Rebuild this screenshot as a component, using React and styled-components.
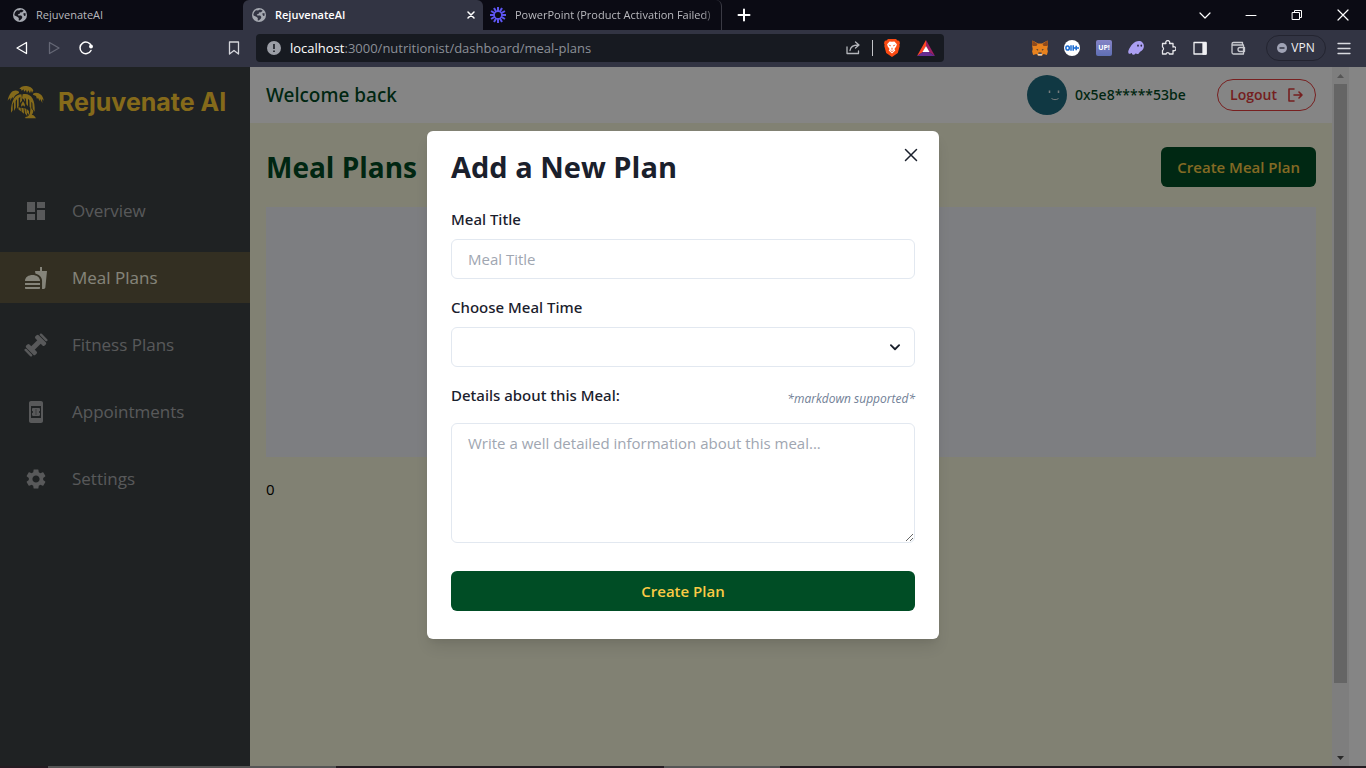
import React from 'react';
import styled, { createGlobalStyle } from 'styled-components';
import { MdDashboard, MdFastfood, MdBookOnline, MdSettings } from 'react-icons/md';

const GlobalStyle = createGlobalStyle`
  *, *::before, *::after { box-sizing: border-box; }
  body { margin: 0; font-family: "Open Sans", "Noto Sans", sans-serif; font-size: 15px; line-height: 24px; }
  button, input, select, textarea { font: inherit; color: inherit; margin: 0; }
  h1, h2, p { margin: 0; }
  svg { display: block; flex: none; }
`;

const Window = styled.div`
  display: flex;
  flex-direction: column;
  height: 100vh;
  background: #323443;
  overflow: hidden;
`;

const TabStrip = styled.div`
  display: flex;
  flex: none;
  height: 30px;
  background: #0b0b14;
  color: #b9b9be;
  font-size: 11px;
`;

const Tab = styled.div`
  display: flex;
  align-items: center;
  gap: 9px;
  width: ${(p) => p.$width};
  padding: 0 8px 0 ${(p) => p.$inset};
  border-radius: 6px 6px 0 0;
  background: ${(p) => (p.$active ? '#323443' : 'transparent')};
  color: ${(p) => (p.$active ? '#fff' : 'inherit')};
  font-weight: ${(p) => (p.$active ? 600 : 400)};
  border-right: ${(p) => (p.$divided ? '1px solid #3a3a44' : '0')};
`;

const TabTitle = styled.span`
  flex: 1;
  white-space: nowrap;
  mask-image: ${(p) => (p.$fade ? 'linear-gradient(90deg, #000 94%, rgba(0, 0, 0, 0.3))' : 'none')};
`;

const PlainButton = styled.button`
  display: grid;
  place-items: center;
  width: ${(p) => p.$width || '32px'};
  height: ${(p) => p.$height || '30px'};
  padding: 0;
  border: 0;
  background: transparent;
  color: ${(p) => p.$tone || '#fff'};
  cursor: pointer;
`;

const BookmarkButton = styled(PlainButton)`
  margin: 0 6px 0 116px;
`;

const WindowControls = styled.div`
  display: flex;
  margin-left: auto;
`;

const Toolbar = styled.div`
  display: flex;
  align-items: center;
  flex: none;
  height: 37px;
  padding: 0 6px 1px;
`;

const AddressBar = styled.div`
  display: flex;
  align-items: center;
  flex: 0 1 688px;
  height: 28px;
  padding-left: 11px;
  border-radius: 4px;
  background: #171a21;
  color: #8c9098;
  font-size: 13px;
`;

const Url = styled.span`
  flex: 1;
  padding-left: 9px;
  white-space: nowrap;
  b { font-weight: 400; color: #fff; }
`;

const Divider = styled.i`
  width: 1px;
  height: 16px;
  background: #c3c4c9;
  margin: 0 3px;
`;

const Extensions = styled.div`
  display: flex;
  align-items: center;
  margin-left: auto;
`;

const Vpn = styled.button`
  display: flex;
  align-items: center;
  justify-content: center;
  gap: 4px;
  width: 60px;
  height: 26px;
  margin: 0 2px 0 6px;
  padding: 0;
  border: 1px solid #232430;
  border-radius: 13px;
  background: transparent;
  color: #f0f0f3;
  font-size: 12px;
`;

const Viewport = styled.div`
  position: relative;
  display: flex;
  flex: 1;
  min-height: 0;
  background: #fff;
`;

const Sidebar = styled.aside`
  flex: none;
  width: 250px;
  background: #3c4244;
`;

const Brand = styled.div`
  display: flex;
  align-items: center;
  gap: 14px;
  height: 70px;
  margin-bottom: 48px;
  padding-left: 7px;
  color: #ffcc33;
  font: 700 25px/36px Inter, sans-serif;
  white-space: nowrap;
`;

const Nav = styled.nav`
  display: flex;
  flex-direction: column;
  gap: 16px;
`;

const NavLink = styled.a`
  display: flex;
  align-items: center;
  gap: 24px;
  height: 51px;
  padding-left: 24px;
  background: ${(p) => (p.$active ? '#625a41' : 'transparent')};
  color: ${(p) => (p.$active ? '#fffeea' : '#a9abad')};
  font-size: 17px;
  text-decoration: none;
`;

const Main = styled.main`
  flex: 1;
  min-width: 0;
  background: #f8f8dc;
`;

const TopBar = styled.header`
  display: flex;
  align-items: center;
  height: 56px;
  padding: 0 16px;
  background: #fff;
  color: #004a24;
  font-family: "Noto Sans", sans-serif;
  font-weight: 500;
`;

const Welcome = styled.span`
  flex: 1;
  font-size: 19px;
`;

const Wallet = styled.span`
  width: 114px;
  margin: 0 28px 0 8px;
  font-size: 14px;
`;

const Logout = styled.button`
  display: flex;
  align-items: center;
  justify-content: center;
  gap: 10px;
  width: 99px;
  height: 32px;
  padding: 0;
  border: 1px solid #e53e3e;
  border-radius: 16px;
  background: transparent;
  color: #e03c3c;
  font: 600 14px/24px "Open Sans", sans-serif;
`;

const Content = styled.div`
  padding: 24px 16px;
`;

const TitleRow = styled.div`
  display: flex;
  align-items: center;
  justify-content: space-between;
  margin-bottom: 20px;
`;

const PageTitle = styled.h1`
  color: #004a24;
  font-size: 28px;
  font-weight: 700;
  line-height: 40px;
`;

const PrimaryButton = styled.button`
  height: 40px;
  width: ${(p) => (p.$block ? '100%' : 'auto')};
  padding: 0 16px;
  border: 0;
  border-radius: 6px;
  background: #004d25;
  color: #fbcb45;
  font-size: 15px;
  font-weight: 600;
  cursor: pointer;
`;

const Banner = styled.div`
  height: 250px;
  margin-bottom: 20px;
  background: #f0f1f8;
`;

const Scrollbar = styled.div`
  display: flex;
  flex-direction: column;
  width: 17px;
  margin-right: 17px;
  background: #f1f1f1;
`;

const ScrollTrack = styled.div`
  flex: 1;
  padding: 0 2px;
`;

const Thumb = styled.div`
  height: 90%;
  background: #c1c1c1;
`;

const Overlay = styled.div`
  position: absolute;
  inset: 0;
  display: flex;
  align-items: flex-start;
  justify-content: center;
  padding-top: 64px;
  background: rgba(0, 0, 0, 0.48);
`;

const Dialog = styled.section`
  position: relative;
  width: 512px;
  padding: 16px 24px 28px;
  border-radius: 6px;
  background: #fff;
  color: #1a202c;
  box-shadow: 0 10px 15px -3px rgba(0, 0, 0, 0.1), 0 4px 6px -2px rgba(0, 0, 0, 0.05);
`;

const CloseButton = styled(PlainButton)`
  position: absolute;
  top: 8px;
  right: 12px;
`;

const DialogTitle = styled.h2`
  margin-bottom: 20px;
  font-size: 29px;
  font-weight: 700;
  line-height: 40px;
`;

const Field = styled.div`
  margin-bottom: 16px;
`;

const Label = styled.label`
  display: block;
  margin-bottom: 8px;
  font-family: "Noto Sans", sans-serif;
  font-weight: 500;
`;

const control = `
  display: block;
  width: 100%;
  height: 40px;
  padding: 0 16px;
  border: 1px solid #e2e8f0;
  border-radius: 6px;
  background: #fff;
  outline: 0;
  &::placeholder { color: #a0a6b1; opacity: 1; }
`;

const TextInput = styled.input`${control}`;

const SelectBox = styled.div`
  display: grid;
  align-items: center;
  > * { grid-area: 1 / 1; }
  > svg { justify-self: end; margin-right: 14px; pointer-events: none; }
`;

const Select = styled.select`
  ${control}
  appearance: none;
`;

const TextArea = styled.textarea`
  ${control}
  height: 120px;
  padding: 8px 16px;
  line-height: 22px;
  resize: vertical;
  margin-bottom: 28px;
`;

const LabelRow = styled.div`
  display: flex;
  align-items: center;
  justify-content: space-between;
  height: 32px;
  margin-bottom: 8px;
`;

const Hint = styled.em`
  color: #718096;
  font-size: 12px;
`;

const Taskbar = styled.div`
  flex: none;
  height: 2px;
  background: linear-gradient(90deg, #241c22 48px, #555 48px 336px, #241c22 336px 664px, #555 664px 780px, #241c22 780px);
`;

const Line = ({ size = 16, w = 1.5, children }) => (
  <svg width={size} height={size} viewBox="0 0 16 16" fill="none" stroke="currentColor" strokeWidth={w} strokeLinecap="round" strokeLinejoin="round" aria-hidden="true">
    {children}
  </svg>
);

const Globe = ({ tone }) => (
  <svg width="14" height="14" viewBox="0 0 14 14" aria-hidden="true">
    <circle cx="7" cy="7" r="7" fill="#a5a8b0" />
    <path d="M8 1.400c1 .2 2 .6 2.700 1.300L9 4.200l-2 .2-.3 1.400-1.900.6.500 1 2.900.1 1.200 1.400-.7 1.900-2 1.800-1-.3.1-2.200-1.500-1.300L1.300 7.300C1.400 5 2.500 3.300 4 2.300l2 .3z" fill={tone} />
    <path d="M10.200 5.600l2.200-.5.300 2.300-1.600.5z" fill={tone} />
  </svg>
);

const Burst = () => (
  <svg width="16" height="16" viewBox="0 0 16 16" stroke="#5d55f0" strokeWidth="2" fill="none" aria-hidden="true">
    {[0, 30, 60, 90, 120, 150, 180, 210, 240, 270, 300, 330].map((a) => (
      <path key={a} d="M8 0v4.600" transform={`rotate(${a} 8 8)`} />
    ))}
    <circle cx="8" cy="8" r="3.800" strokeWidth="1.400" />
  </svg>
);

const Brave = () => (
  <svg width="16" height="18" viewBox="0 0 16 18" aria-hidden="true">
    <path d="M4 0h8l1.500 1.500 1.700.3.8 2.400-.6 1.500.3 1.200-1.900 7L8 18l-5.800-4.100L.3 6.900l.3-1.200L0 4.200l.8-2.400 1.700-.3z" fill="#fb4a12" />
    <path d="M8 2.700l2.400-.3 2.500 2.800-.7 2.300-1.800 2.400.9 1.500L8 14.500l-3.300-3.100.9-1.500-1.800-2.400-.7-2.300 2.500-2.800z" fill="#fff" />
    <path d="M4.300 5.600l2.500.7-.4 1.200zM11.700 5.600l-2.500.7.400 1.200zM8 8.300l.7 1.700L8 11l-.7-1zM5.800 11.200L8 12l2.200-.8L8 13z" fill="#fb4a12" />
  </svg>
);

const Bat = () => (
  <svg width="18" height="16" viewBox="0 0 18 16" aria-hidden="true">
    <path d="M9 0L0 16l6-4 3-6z" fill="#ff4724" />
    <path d="M9 0l9 16-6-4-3-6z" fill="#9e1f63" />
    <path d="M0 16h18l-6-4H6z" fill="#662d91" />
    <path d="M9 6l3.500 6h-7z" fill="#fff" />
  </svg>
);

const Fox = () => (
  <svg width="16" height="16" viewBox="0 0 16 16" aria-hidden="true">
    <path d="M.5.500L6 3.500h4L15.500.5 16 5l-.7 4 .6 2.500-1 3.500-3.400-1-1.500 1.700H6L4.500 14l-3.400 1-1-3.500L.7 9 0 5z" fill="#e8821e" />
    <path d="M.5.500L5.500 4 4.500 6 .7 6 0 5zM15.500.500L10.500 4l1 2 3.800 0 .7-1z" fill="#8e4a1c" />
    <path d="M5.800 13.500h4.400l-.4 2H6.200z" fill="#d9cfc6" />
    <path d="M4 9l2.200.6-.2 1.200zM12 9l-2.200.6.2 1.200zM6.500 12.500h3l.3 1.300H6.200z" fill="#24323f" />
  </svg>
);

const Oih = () => (
  <svg width="16" height="16" viewBox="0 0 16 16" aria-hidden="true">
    <circle cx="8" cy="8" r="8" fill="#fff" />
    <g fill="none" stroke="#1769d1" strokeWidth="1.500">
      <ellipse cx="3.600" cy="8" rx="1.700" ry="2.100" />
      <path d="M7 5.300v5.400M9.200 5.300v5.400M9.200 8h3M12.200 5.800v4.400M14 7v2" />
    </g>
  </svg>
);

const UpMark = styled.span`
  display: grid;
  place-items: center;
  width: 16px;
  height: 16px;
  border-radius: 2px;
  background: linear-gradient(#8583c6, #5f6fb4);
  color: #fff;
  font: 700 7px/16px "Open Sans", sans-serif;
`;

const Ghost = () => (
  <svg width="16" height="16" viewBox="0 0 16 16" aria-hidden="true">
    <path d="M15.900 6.300C15.900 3 13.700 1 10.900 1 6 1 2.600 5.700.600 10.300c-.9 2 0 3.700 1.300 3.500.8-.1 1.300-.8 1.700-.8.400 0 .2 1.800 1.900 1.800 1.500 0 2-1.600 2.500-1.600.4 0 .4 1 1.800.8 1.300-.2 1.600-2 2.300-2.300 2.300-1 3.800-3 3.800-5.400z" fill="#ab9ff2" />
    <ellipse cx="10" cy="5.600" rx=".8" ry="1.200" fill="#2b2740" />
    <ellipse cx="13.300" cy="5.600" rx=".8" ry="1.200" fill="#2b2740" />
  </svg>
);

const PalmLogo = () => (
  <svg width="37" height="34" viewBox="21 30 111 102" fill="currentColor" aria-hidden="true">
    <path d="M58 42C62 34 70 32 80 33c9 1 16 5 20 13l-4 8-3-8-3 9-5-9-4 8-3-9-6 5-1-7-6 4-2-5z" />
    <path d="M57 50C45 41 28 48 23 77c3-4 5-6 8-8l-1 10c3-7 5-10 8-13l1 6c3-8 8-13 18-18z" />
    <path d="M99 56c12-7 30 1 32 21l-5-5 1 12-7-13-1 8-5-11-3 4-3-9-9-4z" />
    <path d="M64 58C48 58 32 74 33 113l5-7V88l4-8v28l5-10V78l4-6v30l5-9V70l5-5-1 19 6-7-1-14z" />
    <path d="M68 58c24-5 38 14 36 52l-6-9-1-17-3-4v22l-5-6-1-20-4-5v23l-5-6-1-16-4-4 1 12-5-8-4-2z" />
    <path d="M64 87l5-8 5 8 1 8-6-4-6 4z" />
    <path d="M55 96l7 3 1 10-7-5zM64 98l7 2 1 16-7-6zM73 99l6 3 3 22-7-9zM81 103l6 5v12l-6-7z" />
    <path d="M91 97l9 10c-1 7-2 9-5 12 4 0 9 3 13 11H76v-4c10 0 16-8 15-29z" />
  </svg>
);

const Dumbbell = () => (
  <svg width="24" height="24" viewBox="0 0 24 24" fill="currentColor" aria-hidden="true">
    <g transform="rotate(-45 12 12)">
      <rect x="0" y="7" width="2.400" height="10" rx="1.200" />
      <rect x="3.200" y="5.500" width="4.600" height="13" rx="1.500" />
      <rect x="7" y="9.600" width="10" height="4.800" />
      <rect x="16.200" y="5.500" width="4.600" height="13" rx="1.500" />
      <rect x="21.600" y="7" width="2.400" height="10" rx="1.200" />
    </g>
  </svg>
);

const Avatar = () => (
  <svg width="40" height="40" viewBox="0 0 40 40" aria-hidden="true">
    <circle cx="20" cy="20" r="20" fill="#1f6c80" />
    <g stroke="#e4eef0" fill="none">
      <path d="M22.500 15.500v2.500M31.500 15.500v2.500" strokeWidth="1.500" />
      <path d="M24.500 23.500c2 1.500 5 1.500 7 0" />
    </g>
  </svg>
);

const Arrow = ({ down, tone }) => (
  <svg width="17" height="17" viewBox="0 0 17 17" fill={tone} aria-hidden="true">
    <path d={down ? 'M5 7h7l-3.500 4z' : 'M5 11h7L8.500 7z'} />
  </svg>
);

const navItems = [
  { label: 'Overview', icon: <MdDashboard size={24} /> },
  { label: 'Meal Plans', icon: <MdFastfood size={24} />, active: true },
  { label: 'Fitness Plans', icon: <Dumbbell /> },
  { label: 'Appointments', icon: <MdBookOnline size={24} /> },
  { label: 'Settings', icon: <MdSettings size={24} /> },
];

function BrowserChrome() {
  return (
    <>
      <TabStrip>
        <Tab $width="243px" $inset="13px"><Globe tone="#15151d" /><TabTitle>RejuvenateAI</TabTitle></Tab>
        <Tab $width="240px" $inset="9px" $active>
          <Globe tone="#323443" /><TabTitle>RejuvenateAI</TabTitle>
          <PlainButton $width="8px" aria-label="Close tab"><Line size={8} w={3}><path d="M2 2l12 12M14 2L2 14" /></Line></PlainButton>
        </Tab>
        <Tab $width="239px" $inset="7px" $divided><Burst /><TabTitle $fade>PowerPoint (Product Activation Failed)</TabTitle></Tab>
        <PlainButton $width="44px" aria-label="New tab"><Line w={2}><path d="M8 2.500v11M2.500 8h11" /></Line></PlainButton>
        <WindowControls>
          <PlainButton $width="46px" aria-label="Search tabs"><Line w={1.2}><path d="M3 6l5 5 5-5" /></Line></PlainButton>
          <PlainButton $width="46px" aria-label="Minimize"><Line w={1}><path d="M3 8.500h10" /></Line></PlainButton>
          <PlainButton $width="46px" aria-label="Restore"><Line w={1}><path d="M3.500 5.500h7v7h-7zM5.500 5.500v-2h7v7h-2" /></Line></PlainButton>
          <PlainButton $width="46px" aria-label="Close"><Line w={1.2}><path d="M3 3l10 10M13 3L3 13" /></Line></PlainButton>
        </WindowControls>
      </TabStrip>
      <Toolbar>
        <PlainButton aria-label="Back"><Line w={1.3}><path d="M12.500 2.500v11L3 8z" /></Line></PlainButton>
        <PlainButton $tone="#656775" aria-label="Forward"><Line w={1.3}><path d="M3.500 2.500v11L13 8z" /></Line></PlainButton>
        <PlainButton aria-label="Reload"><Line><path d="M13 10.500a5.800 5.800 0 1 1 .3-4.500" /><circle cx="13" cy="6.500" r="1.200" fill="currentColor" /></Line></PlainButton>
        <BookmarkButton $tone="#d5d6dc" aria-label="Bookmark"><Line w={1.3}><path d="M3.500 2h9v12L8 10.500 3.500 14z" /></Line></BookmarkButton>
        <AddressBar>
          <svg width="14" height="14" viewBox="0 0 14 14" aria-hidden="true"><circle cx="7" cy="7" r="7" fill="#9b9ea6" /><path d="M7 3v5M7 9.500v1.600" stroke="#171a21" strokeWidth="1.600" /></svg>
          <Url><b>localhost</b>:3000/nutritionist/dashboard/meal-plans</Url>
          <PlainButton $tone="#b4b6bc" aria-label="Share"><Line w={1.3}><path d="M2 7v6.500h11.500V11M5 10.500C5.500 7 8 5 13 5M10.500 2L14 5l-3.500 3" /></Line></PlainButton>
          <Divider />
          <PlainButton aria-label="Brave Shields"><Brave /></PlainButton>
          <PlainButton $width="36px" aria-label="Brave Rewards"><Bat /></PlainButton>
        </AddressBar>
        <Extensions>
          <PlainButton aria-label="MetaMask"><Fox /></PlainButton>
          <PlainButton aria-label="OIH"><Oih /></PlainButton>
          <PlainButton aria-label="UP"><UpMark>UP!</UpMark></PlainButton>
          <PlainButton aria-label="Phantom"><Ghost /></PlainButton>
          <PlainButton $tone="#e6e6ea" aria-label="Extensions"><Line w={1.3}><path d="M3 3.500h3a2 2 0 1 1 3.500 0h3.500v3.500a2 2 0 1 1 0 3.500V14H9.500a1.800 1.800 0 0 0-3.500 0H2.500v-3.500a2 2 0 0 0 0-3.500V3.500z" /></Line></PlainButton>
          <PlainButton $tone="#f0f0f3" aria-label="Sidebar"><Line w={1.3}><rect x="2" y="2.500" width="12" height="11.500" /><path d="M11 3h3v11h-3z" fill="currentColor" /></Line></PlainButton>
          <PlainButton $width="44px" $tone="#c9cad0" aria-label="Wallet"><Line w={1.3}><path d="M12.500 4.500V2.500H3.500a1.500 1.500 0 0 0-1.500 1.500v8.500c0 .8.700 1.500 1.500 1.500H13.500V5H3M14.500 7.500H10a2 2 0 0 0 0 4h4.500z" /></Line></PlainButton>
          <Vpn><svg width="10" height="10" viewBox="0 0 10 10" aria-hidden="true"><circle cx="5" cy="5" r="5" fill="#a0a3b5" /><path d="M2.500 5h5" stroke="#323443" strokeWidth="1.500" /></svg>VPN</Vpn>
          <PlainButton $tone="#d9dae0" aria-label="Menu"><Line w={1.3}><path d="M2 3.500h12M2 8.500h12M2 13.500h12" /></Line></PlainButton>
        </Extensions>
      </Toolbar>
    </>
  );
}

export default function App() {
  return (
    <Window>
      <GlobalStyle />
      <BrowserChrome />
      <Viewport>
        <Sidebar>
          <Brand><PalmLogo />Rejuvenate AI</Brand>
          <Nav>
            {navItems.map((item) => (
              <NavLink key={item.label} href="#" $active={item.active}>{item.icon}{item.label}</NavLink>
            ))}
          </Nav>
        </Sidebar>
        <Main>
          <TopBar>
            <Welcome>Welcome back</Welcome>
            <Avatar />
            <Wallet>0x5e8*****53be</Wallet>
            <Logout>Logout<Line w={1.6}><path d="M7 2H2v12h5M7 8h8M12 5l3 3-3 3" /></Line></Logout>
          </TopBar>
          <Content>
            <TitleRow>
              <PageTitle>Meal Plans</PageTitle>
              <PrimaryButton>Create Meal Plan</PrimaryButton>
            </TitleRow>
            <Banner />
            <p>0</p>
          </Content>
        </Main>
        <Scrollbar>
          <Arrow tone="#a3a3a3" />
          <ScrollTrack><Thumb /></ScrollTrack>
          <Arrow down tone="#505050" />
        </Scrollbar>
        <Overlay>
          <Dialog role="dialog" aria-labelledby="dialog-title">
            <DialogTitle id="dialog-title">Add a New Plan</DialogTitle>
            <CloseButton $height="32px" $tone="#1a202c" aria-label="Close dialog"><Line><path d="M2.500 2.500l11 11M13.500 2.500l-11 11" /></Line></CloseButton>
            <Field>
              <Label htmlFor="meal-title">Meal Title</Label>
              <TextInput id="meal-title" placeholder="Meal Title" />
            </Field>
            <Field>
              <Label htmlFor="meal-time">Choose Meal Time</Label>
              <SelectBox>
                <Select id="meal-time" defaultValue=""><option value="" /></Select>
                <Line size={12} w={2.4}><path d="M2.500 5.500L8 11l5.500-5.500" /></Line>
              </SelectBox>
            </Field>
            <LabelRow>
              <Label htmlFor="meal-details">Details about this Meal:</Label>
              <Hint>*markdown supported*</Hint>
            </LabelRow>
            <TextArea id="meal-details" placeholder="Write a well detailed information about this meal..." />
            <PrimaryButton $block>Create Plan</PrimaryButton>
          </Dialog>
        </Overlay>
      </Viewport>
      <Taskbar />
    </Window>
  );
}
